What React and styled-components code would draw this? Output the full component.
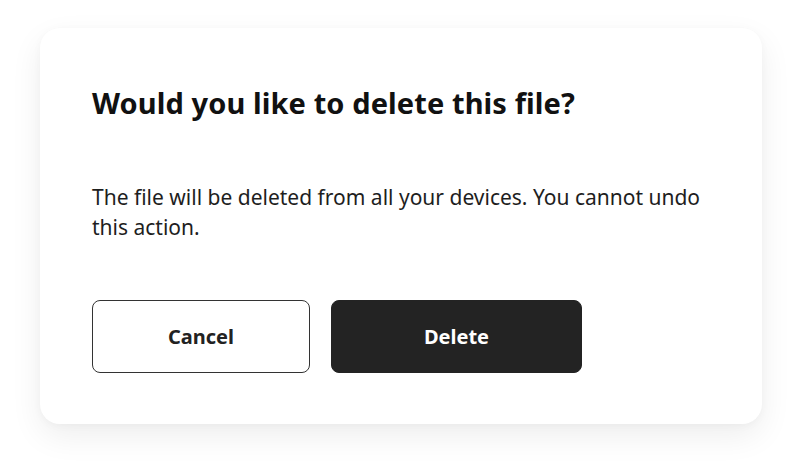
import React from "react";
import styled, { createGlobalStyle } from "styled-components";

const Global = createGlobalStyle`
  html, body { margin: 0; padding: 0; background: #ffffff; }
  body { font-family: "Noto Sans", "Liberation Sans", sans-serif; -webkit-font-smoothing: antialiased; }
`;

const Page = styled.div`
  width: 800px;
  height: 474px;
  box-sizing: border-box;
  padding: 28px 38px 0 40px;
`;

const Card = styled.div`
  width: 722px;
  height: 396px;
  box-sizing: border-box;
  background: #ffffff;
  border-radius: 20px;
  box-shadow: 0 12px 32px rgba(0, 0, 0, 0.07), 0 2px 8px rgba(0, 0, 0, 0.03);
  padding: 55px 52px 0 52px;
  display: flex;
  flex-direction: column;
`;

const Title = styled.h1`
  margin: 0;
  font-size: 29px;
  line-height: 40px;
  font-weight: 700;
  letter-spacing: 0.1px;
  color: #111111;
`;

const Body = styled.p`
  margin: 59px 0 0 0;
  font-size: 21px;
  line-height: 30px;
  color: #1e1e1e;
`;

const Actions = styled.div`
  display: flex;
  gap: 21px;
  margin-top: 58px;
`;

const Button = styled.button`
  width: ${(p) => p.$w}px;
  height: 73px;
  box-sizing: border-box;
  border-radius: 8px;
  font-family: inherit;
  font-size: 20px;
  font-weight: 700;
  cursor: pointer;
  border: 1.5px solid;
  background: ${(p) => (p.$primary ? "#232323" : "#ffffff")};
  border-color: ${(p) => (p.$primary ? "#232323" : "#333333")};
  color: ${(p) => (p.$primary ? "#ffffff" : "#222222")};
`;

export default function App() {
  return (
    <>
      <Global />
      <Page>
        <Card>
          <Title>Would you like to delete this file?</Title>
          <Body>
            The file will be deleted from all your devices. You cannot undo this action.
          </Body>
          <Actions>
            <Button $w={218}>Cancel</Button>
            <Button $w={251} $primary>Delete</Button>
          </Actions>
        </Card>
      </Page>
    </>
  );
}
